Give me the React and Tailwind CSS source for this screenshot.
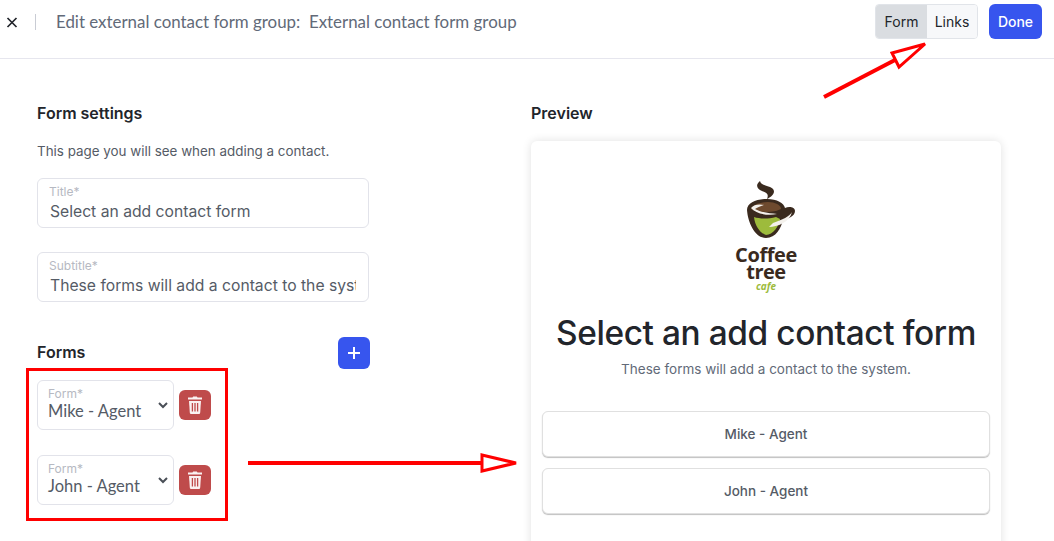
import React from "react";

const font = { fontFamily: "Inter, 'Noto Sans', sans-serif" };

function Field({ label, value, className = "" }) {
  return (
    <div className={`h-[50px] w-[332px] rounded-md border border-[#e2e3ea] bg-white pl-[11px] pr-[12px] pt-[5px] ${className}`}>
      <div className="text-[12px] leading-[15px] text-[#b6b9c2]">{label}</div>
      <div className="mt-[2px] overflow-hidden whitespace-nowrap pl-[1px] text-[15.7px] leading-[22px] text-[#555b66]">{value}</div>
    </div>
  );
}

function Trash() {
  return (
    <svg width="16" height="18" viewBox="0 0 16 18" fill="none">
      <path d="M5.5 1.6 6.2.5h3.6l.7 1.1H15v1.9H1V1.6z" fill="#fff" fillOpacity=".92" />
      <path d="M2 5h12l-.8 11.4c-.1.9-.7 1.6-1.6 1.6H4.4c-.9 0-1.5-.7-1.6-1.6z" fill="#fff" fillOpacity=".92" />
      <path d="M5.4 7v8.6M8 7v8.6M10.6 7v8.6" stroke="#bf4b4b" strokeWidth="1.3" />
    </svg>
  );
}

function FormRow({ value, className = "" }) {
  return (
    <div className={`flex items-center gap-[5px] ${className}`}>
      <div className="relative h-[50px] w-[137px] rounded-md border border-[#e2e3ea] bg-white pl-[10px] pt-[5px]">
        <div className="text-[12px] leading-[15px] text-[#b6b9c2]">Form*</div>
        <div className="text-[16.5px] leading-[20px] text-[#555b66]" style={{ fontFamily: "Lato, sans-serif" }}>{value}</div>
        <svg className="absolute right-[4px] top-[20px]" width="12" height="8" viewBox="0 0 12 8" fill="none">
          <path d="M2 2l4 4 4-4" stroke="#4a4f57" strokeWidth="2" />
        </svg>
      </div>
      <button className="flex h-[30px] w-[32px] items-center justify-center rounded-md bg-[#bf4b4b]">
        <Trash />
      </button>
    </div>
  );
}

function Logo() {
  return (
    <div className="flex flex-col items-center">
      <svg className="ml-[8px]" width="60" height="64" viewBox="0 0 60 64" fill="none">
        <path d="M20 3C15 7 17 11 22 13C27 15 29 16 27 21C34 18 37 12 30 9C25 7 21 7 20 3z" fill="#3a2a1e" />
        <path d="M7 32C7 25 17 21 27 21C37 21 44 25 45 30C49 28 55 29 55 33C55 38 48 41 43 42C41 50 36 60 26 60C15 60 8 45 7 32z" fill="#3a2a1e" />
        <path d="M11 31C12 27 20 24 28 24C35 24 41 27 41 31C34 35 18 35 11 31z" fill="#6e4a2e" />
        <path d="M11 30C14 26 20 26 24 27C20 28 17 30 15 31C22 35 31 35 37 36C28 38 16 36 11 30z" fill="#f4f1ec" />
        <path d="M14 39C20 41 28 41 36 39L40 41C39 48 33 57 26 57C20 55 15 48 14 39z" fill="#9dbb3c" />
        <path d="M29 49C37 49 50 44 52 34C50 38 42 42 33 45z" fill="#f4f1ec" />
      </svg>
      <div className="mt-[4px] text-center font-bold text-[#3a2a1e]" style={{ fontFamily: "'Open Sans', sans-serif" }}>
        <div className="text-[20px] leading-[18px] tracking-[-0.4px]">Coffee</div>
        <div className="-mt-[1px] text-[20px] leading-[17px] tracking-[-0.5px]">tree</div>
        <div className="mt-[2px] text-[10px] italic leading-[9px] text-[#9dbb3c]">cafe</div>
      </div>
    </div>
  );
}

export default function App() {
  return (
    <div className="relative h-[541px] w-[1054px] overflow-hidden bg-white text-[#22252b]" style={font}>
      <header className="flex h-[59px] items-start border-b border-[#e6e6ee] pr-[12px]">
        <div className="flex h-[43px] items-center">
          <svg className="ml-[6px]" width="12" height="12" viewBox="0 0 12 12" fill="none">
            <path d="M1.5 2l9 9M10.5 2l-9 9" stroke="#22252b" strokeWidth="1.7" />
          </svg>
          <div className="ml-[17px] h-[16px] w-px bg-[#c9ccd4]" />
          <div className="ml-[20px] whitespace-pre text-[16.9px] text-[#626a78]" style={{ fontFamily: "Lato, sans-serif" }}>
            Edit external contact form group:  External contact form group
          </div>
        </div>
        <div className="ml-auto mt-[4px] flex h-[35px] items-center gap-[11px]">
          <div className="flex h-[35px] overflow-hidden rounded border border-[#e1e4e9] text-[14px] text-[#22252b]">
            <div className="flex w-[51px] items-center justify-center bg-[#dadde1]">Form</div>
            <div className="flex w-[50px] items-center justify-center bg-[#f7f8fa]">Links</div>
          </div>
          <button className="h-[35px] w-[53px] rounded-md bg-[#3755ee] text-[14px] font-medium text-white">Done</button>
        </div>
      </header>

      <main className="flex pl-[37px]">
        <section className="w-[494px] pt-[44px]">
          <h2 className="text-[16px] font-semibold leading-[20px] text-[#22252b]">Form settings</h2>
          <p className="mt-[18px] text-[13.4px] leading-[20px] text-[#555b66]">This page you will see when adding a contact.</p>
          <Field className="mt-[17px]" label="Title*" value="Select an add contact form" />
          <Field className="mt-[24px]" label="Subtitle*" value="These forms will add a contact to the system." />
          <div className="mt-[35px] flex w-[333px] items-center justify-between">
            <h2 className="-mt-[2px] text-[16px] font-semibold text-[#22252b]">Forms</h2>
            <button className="flex h-[32px] w-[32px] items-center justify-center rounded-md bg-[#3755ee]">
              <svg width="14" height="14" viewBox="0 0 14 14" fill="none">
                <path d="M7 1v12M1 7h12" stroke="#fff" strokeWidth="2" />
              </svg>
            </button>
          </div>
          <FormRow className="mt-[11px]" value="Mike - Agent" />
          <FormRow className="mt-[25px]" value="John - Agent" />
        </section>

        <section className="w-[470px] pt-[44px]">
          <h2 className="text-[16px] font-semibold leading-[20px] text-[#22252b]">Preview</h2>
          <div className="mt-[18px] h-[420px] rounded-md bg-white px-[11px] pt-[37px] shadow-[0_0_10px_rgba(0,0,0,0.12)]">
            <Logo />
            <h1 className="mt-[20px] whitespace-nowrap text-center text-[33.4px] font-medium leading-[44px] tracking-[-0.4px] text-[#22252b]">
              Select an add contact form
            </h1>
            <p className="mt-[4px] text-center text-[13.5px] leading-[20px] text-[#626a78]">These forms will add a contact to the system.</p>
            <div className="mt-[32px] flex flex-col gap-[11px]">
              {["Mike - Agent", "John - Agent"].map((t) => (
                <button key={t} className="h-[46px] w-full rounded-md border border-[#e0e0e0] bg-white text-[13.5px] font-medium text-[#555b66] shadow-[0_1px_1px_rgba(0,0,0,0.25)]">
                  {t}
                </button>
              ))}
            </div>
          </div>
        </section>
      </main>

      <div className="absolute left-[26px] top-[368px] h-[153px] w-[202px] border-[3px] border-[#ff0000]" />
      <svg className="pointer-events-none absolute inset-0" width="1054" height="541" viewBox="0 0 1054 541" fill="none">
        <path d="M248 463H481" stroke="#ff0000" strokeWidth="4" />
        <path d="M482 455L516 463L482 471Z" stroke="#ff0000" strokeWidth="3" fill="#fff" />
        <path d="M824 97L895 60" stroke="#ff0000" strokeWidth="4" />
        <path d="M892 53L925 44L899 67Z" stroke="#ff0000" strokeWidth="3" fill="#fff" />
      </svg>
    </div>
  );
}
